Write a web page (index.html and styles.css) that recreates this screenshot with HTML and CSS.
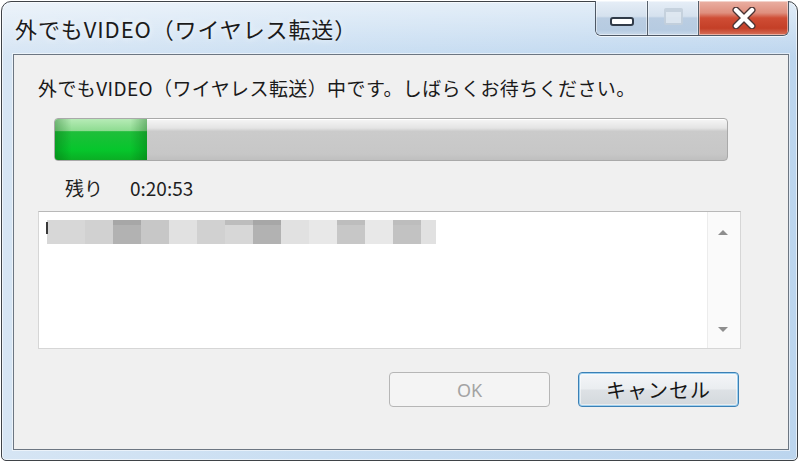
FILE: index.html
```html
<!DOCTYPE html>
<html lang="ja">
<head>
<meta charset="utf-8">
<title>外でもVIDEO（ワイヤレス転送）</title>
<link rel="stylesheet" href="styles.css">
</head>
<body>
<div class="window">
  <div class="titlebar">
    <div class="title">外でもVIDEO（ワイヤレス転送）</div>
    <div class="caption">
      <div class="cbtn min"><span class="min-icon"></span></div>
      <div class="cbtn max"><span class="max-icon"></span></div>
      <div class="cbtn close">
        <svg width="26" height="22" viewBox="0 0 26 22">
          <path d="M5 3 L21 19 M21 3 L5 19" stroke="#4a3434" stroke-width="7" stroke-linecap="round" fill="none"/>
          <path d="M5 3 L21 19 M21 3 L5 19" stroke="#ffffff" stroke-width="4.4" stroke-linecap="round" fill="none"/>
        </svg>
      </div>
    </div>
  </div>
  <div class="client">
    <div class="msg">外でもVIDEO（ワイヤレス転送）中です。しばらくお待ちください。</div>
    <div class="progress"><div class="fill" style="width:13.7%"></div></div>
    <div class="remain"><span class="rlabel">残り</span><span class="rtime">0:20:53</span></div>
    <div class="logbox">
      <div class="logtext">
        <span class="caret"></span>
        <div class="blk wa g2"></div>
        <div class="blk g3"></div>
        <div class="blk g6 band"></div>
        <div class="blk g4"></div>
        <div class="blk g1"></div>
        <div class="blk g3"></div>
        <div class="blk g2 band2"></div>
        <div class="blk g6 band"></div>
        <div class="blk g1"></div>
        <div class="blk g0"></div>
        <div class="blk g4 band2"></div>
        <div class="blk g0"></div>
        <div class="blk g5 band2"></div>
        <div class="blk wz g1"></div>
      </div>
      <div class="scroll">
        <span class="arr up"></span>
        <span class="arr down"></span>
      </div>
    </div>
    <div class="buttons">
      <div class="btn disabled">OK</div>
      <div class="btn default">キャンセル</div>
    </div>
  </div>
</div>
</body>
</html>
```

FILE: styles.css
```css
html, body {
  margin: 0;
  padding: 0;
  background: #ffffff;
}
body {
  width: 800px;
  height: 462px;
  overflow: hidden;
  font-family: "Noto Sans CJK JP", "Noto Sans", sans-serif;
}
.window {
  box-sizing: border-box;
  margin: 1px 0 0 1px;
  width: 797px;
  height: 460px;
  border: 1px solid #3f4348;
  border-radius: 10px 10px 5px 5px;
  background:
    linear-gradient(to bottom, rgba(255,255,255,0.55) 0, rgba(255,255,255,0) 55px),
    linear-gradient(to right, #d6e5f4 0, #c9def2 40%, #bcd5ee 100%);
  display: flex;
  flex-direction: column;
  box-shadow: inset 0 0 0 1px rgba(255,255,255,0.6);
}
.titlebar {
  height: 52px;
  display: flex;
  align-items: center;
}
.title {
  margin-left: 13px;
  font-size: 22px;
  color: #1b1b1b;
  letter-spacing: 0.9px;
  text-shadow: 0 0 6px rgba(255,255,255,0.9);
}
.caption {
  margin-left: auto;
  margin-right: 8px;
  align-self: flex-start;
  margin-top: -1px;
  display: flex;
  height: 34px;
  border: 1px solid #4e5865;
  border-top: none;
  border-radius: 0 0 6px 6px;
  overflow: hidden;
  box-shadow: 0 1px 0 rgba(255,255,255,0.7);
}
.cbtn {
  display: flex;
  align-items: center;
  justify-content: center;
  box-shadow: inset 0 0 0 1px rgba(255,255,255,0.45);
}
.min, .max {
  width: 51px;
  background: linear-gradient(to bottom, #e6eef7 0, #d5e1ee 45%, #bacde2 50%, #b6cbe1 85%, #c9d9ea 100%);
  border-right: 1px solid #56606c;
}
.max {
  width: 50px;
}
.min-icon {
  margin-top: 6px;
  width: 20px;
  height: 5px;
  border: 2px solid #313b48;
  border-radius: 3px;
  background: #ffffff;
}
.max-icon {
  margin-top: -3px;
  width: 15px;
  height: 11px;
  border: 2px solid #c4d0dc;
  border-top-width: 4px;
  border-radius: 2px;
  background: #dfe8f1;
  opacity: 0.9;
}
.close {
  width: 89px;
  background: linear-gradient(to bottom, #eab0a3 0, #df8f7e 35%, #cf4d35 50%, #c43f27 80%, #d7715a 100%);
}
.client {
  box-sizing: border-box;
  margin: 0 8px 0 11px;
  height: 396px;
  border: 1px solid #6c7682;
  background: #f0f0f0;
  box-shadow: 0 0 0 1px rgba(255,255,255,0.55);
  display: flex;
  flex-direction: column;
}
.msg {
  margin: 21px 0 0 24px;
  height: 24px;
  line-height: 24px;
  font-size: 19px;
  letter-spacing: 0.4px;
  color: #1a1a1a;
  white-space: nowrap;
}
.progress {
  box-sizing: border-box;
  margin: 18px 0 0 40px;
  width: 674px;
  height: 43px;
  border: 1px solid #a9a9a9;
  border-radius: 4px;
  background: linear-gradient(to bottom, #f6f6f6 0, #e4e4e4 22%, #cbcbcb 30%, #c7c7c7 85%, #bfbfbf 100%);
  overflow: hidden;
  box-shadow: inset 0 1px 0 #ffffff;
}
.fill {
  height: 100%;
  background:
    linear-gradient(to right, rgba(0,90,10,0.35) 0, rgba(0,90,10,0) 18%, rgba(0,90,10,0) 82%, rgba(0,90,10,0.35) 100%),
    linear-gradient(to bottom, #b6ebb6 0, #8fdc92 28%, #1fbe3a 31%, #06c62c 75%, #0aae24 100%);
}
.remain {
  margin: 15px 0 0 51px;
  height: 24px;
  line-height: 24px;
  font-size: 19px;
  color: #1e1e1e;
  display: flex;
}
.rlabel {
  width: 65px;
}
.logbox {
  box-sizing: border-box;
  margin: 11px 0 0 24px;
  width: 703px;
  height: 138px;
  background: #ffffff;
  border: 1px solid #d6d6d6;
  border-top-color: #b8b8b8;
  display: flex;
}
.logtext {
  flex: 1;
  display: flex;
  align-items: flex-start;
  padding: 8px 0 0 8px;
  position: relative;
}
.caret {
  position: absolute;
  left: 7px;
  top: 10px;
  width: 2px;
  height: 12px;
  background: #3a3a3a;
}
.blk {
  width: 28px;
  height: 24px;
}
.blk.wa { width: 38px; }
.blk.wz { width: 15px; }
.g0 { background: #e8e8e8; }
.g1 { background: #e1e1e1; }
.g2 { background: #d7d7d7; }
.g3 { background: #d1d1d1; }
.g4 { background: #c7c7c7; }
.g5 { background: #c2c2c2; }
.g6 { background: #b2b2b2; }
.band { background-image: linear-gradient(to bottom, #a7a7a7 0, #a7a7a7 5px, transparent 5px); }
.band2 { background-image: linear-gradient(to bottom, #bdbdbd 0, #bdbdbd 5px, transparent 5px); }
.scroll {
  width: 32px;
  background: #fafafa;
  border-left: 1px solid #ececec;
  position: relative;
}
.arr {
  position: absolute;
  left: 10px;
  width: 0;
  height: 0;
  border-left: 5px solid transparent;
  border-right: 5px solid transparent;
}
.arr.up {
  top: 18px;
  border-bottom: 5px solid #8e8e8e;
}
.arr.down {
  bottom: 16px;
  border-top: 5px solid #8e8e8e;
}
.buttons {
  margin: 23px 0 0 375px;
  display: flex;
  gap: 28px;
}
.btn {
  box-sizing: border-box;
  width: 161px;
  height: 35px;
  border-radius: 4px;
  display: flex;
  align-items: center;
  justify-content: center;
  font-size: 19px;
}
.btn.disabled {
  border: 1px solid #b6b6b6;
  background: #f4f4f4;
  color: #a3a3a3;
  font-family: "Noto Sans", sans-serif;
  font-size: 18px;
}
.btn.default {
  border: 1px solid #3b80b5;
  background: linear-gradient(to bottom, #f4f6f8 0, #eaedf0 48%, #dde1e5 52%, #d3d8dc 100%);
  box-shadow: inset 0 0 0 1px #9fd0ef, inset 0 0 0 2px rgba(255,255,255,0.5);
  color: #151515;
  font-size: 20px;
  letter-spacing: 1px;
}
```
